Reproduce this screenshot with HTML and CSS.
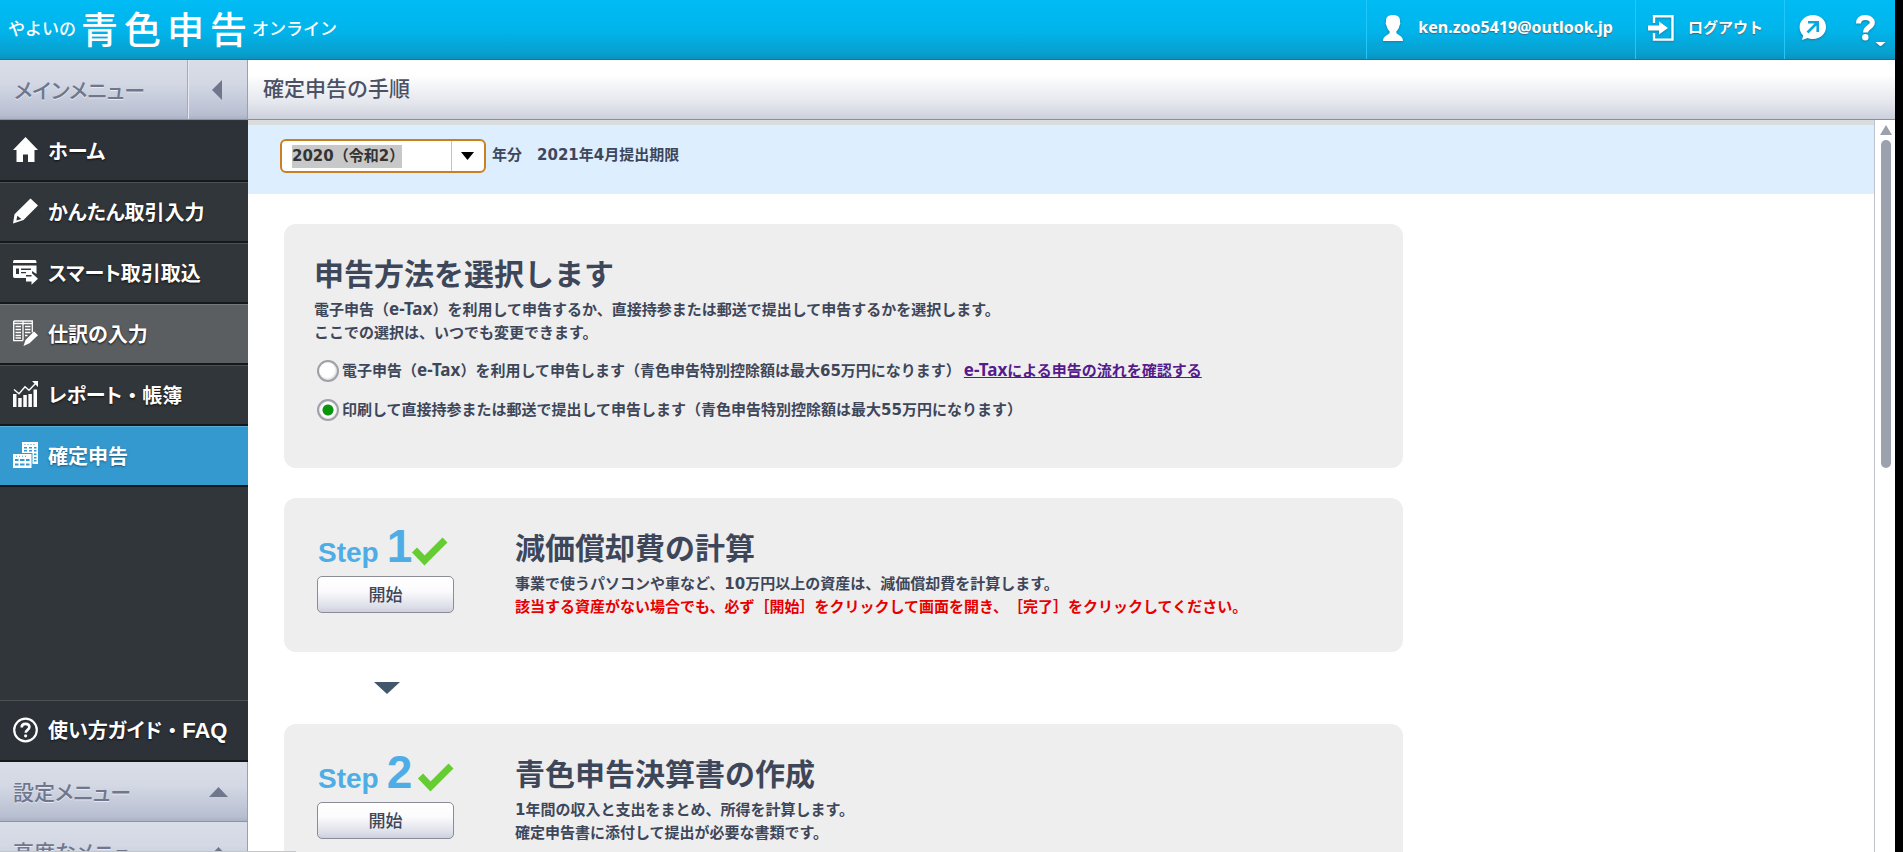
FILE: index.html
```html
<!DOCTYPE html>
<html lang="ja">
<head>
<meta charset="utf-8">
<title>確定申告の手順</title>
<link rel="stylesheet" href="styles.css">
</head>
<body>
<div class="app">
  <header class="topbar">
    <a class="logo" href="#"><span class="logo-small">やよいの</span><span class="logo-big"><span>青</span><span>色</span><span>申</span><span>告</span></span><span class="logo-small">オンライン</span></a>
    <div class="tools">
      <a class="tool tool-user" href="#">
        <svg width="20" height="26" viewBox="0 0 20 26"><path fill="#fff" d="M10 0c4.600 0 7.200 2 7 6 0 1-.1 1.700.4 2.300-.3 1.500-.9 1.900-1 2.700-.4 2.300-1.600 4-3 5.200v1.600c0 2 6.600 2.500 6.600 8.200H0c0-5.700 6.600-6.200 6.600-8.200v-1.600C5.200 15 4 13.300 3.600 11c-.1-.8-.7-1.200-1-2.700.5-.6.4-1.300.4-2.300C2.800 2 5.400 0 10 0z"/></svg>
        <span class="email">ken.zoo5419@outlook.jp</span>
      </a>
      <a class="tool tool-logout" href="#">
        <svg width="26" height="26" viewBox="0 0 26 26"><path fill="none" stroke="#fff" stroke-width="2.400" d="M6 8V1.200h18.500v23.400H6V18"/><path fill="#fff" d="M0 10.500h11V6.500l9 6.500-9 6.500v-4H0z"/></svg>
        <span>ログアウト</span>
      </a>
      <div class="tool tool-icons">
        <button class="icon-button" aria-label="お問い合わせ"><svg width="27" height="26" viewBox="0 0 27 26"><path fill="#fff" d="M14 0c7.200 0 13 5.200 13 12s-5.800 12-13 12c-2 0-3.700-.3-5.300-1.100L3 25l1.200-4.600C1.900 18.300.6 15.400.6 12 .6 5.200 6.800 0 14 0z"/><path fill="none" stroke="#0aa9dd" stroke-width="2.600" d="M9 7.300h9.700V17M18 8l-9.500 9.500"/></svg></button>
        <button class="icon-button help" aria-label="ヘルプ"><svg width="30" height="31" viewBox="0 0 30 31"><path fill="none" stroke="#fff" stroke-width="5" d="M2.500 8.500C2.500 4.500 5 2.500 9.300 2.500s7 2 7 5.200c0 4.600-6.800 4.300-6.800 9.800"/><circle cx="9.300" cy="22.300" r="3.200" fill="#fff"/><path fill="#fff" d="M19.500 27h10l-5 4.500z"/></svg></button>
      </div>
    </div>
  </header>

  <div class="body">
    <aside class="sidebar">
      <div class="menu-head">
        <span class="menu-head-title">メインメニュー</span>
        <button class="collapse" aria-label="メニューを閉じる"><svg width="10" height="20" viewBox="0 0 10 20"><path fill="#70778d" d="M10 0v20L0 10z"/></svg></button>
      </div>
      <nav class="nav">
        <a class="nav-item" href="#"><svg width="25" height="26" viewBox="0 0 25 26"><path fill="#fff" d="M12.500 0L25 13h-3.500v12H15v-7.500h-5V25H3.500V13H0z"/></svg>ホーム</a>
        <a class="nav-item" href="#"><svg width="25" height="26" viewBox="0 0 25 26"><path fill="#fff" fill-rule="evenodd" d="M17.500.5L25 7.500 10.500 22 0 25.500l1.500-9.300zM4.300 17.800l-.9 4.700 5-1.500z"/></svg>かんたん取引入力</a>
        <a class="nav-item" href="#"><svg width="25" height="26" viewBox="0 0 25 26"><path fill="#fff" d="M1 1h21q1.500 0 1.500 3H0q0-3 1-3z"/><path fill="#fff" fill-rule="evenodd" d="M0 6.500h23.500V15l-4.500-3v4h-6v3H1.500Q0 19 0 17zM3 9.500v5.500h3V9.500zM8 9.500V11h10V9.500zM8 13v1.300h5V13z"/><path fill="#fff" d="M13 17.500h5.500v-3.700l6.500 6-6.500 6V22.500H13z"/></svg>スマート取引取込</a>
        <a class="nav-item is-hover" href="#"><svg width="25" height="26" viewBox="0 0 25 26"><path fill="none" stroke="#fff" stroke-width="1.300" d="M.7 1h18.600v11.500M.7 1v19.600H10M10 1v19.600M.7 3.500h18.600"/><path fill="none" stroke="#fff" stroke-width="1.500" d="M2.500 6.500H8M2.500 9.500H8M2.500 12.500H8M2.500 15.500H8M2.500 18H8M12 6.500h5.500M12 9.500h5.500M12 12.500h5.500M12 15.500h2.500"/><path fill="#fff" d="M21 11.500l4 3.700-8.500 8L10.500 26l2-6z"/></svg>仕訳の入力</a>
        <a class="nav-item" href="#"><svg width="25" height="26" viewBox="0 0 25 26"><path fill="#fff" d="M0 13h3.500v13H0zM5.200 17h3.500v9H5.200zM10.300 14h3.500v12h-3.500zM15.400 13h3.500v13h-3.500zM20.500 8.500H24V26h-3.500zM19 0h6v6z"/><path fill="none" stroke="#fff" stroke-width="1.400" d="M1 8.500l5 4.300 6-7 4 3.500L23.500 1.500"/></svg><span>レポート<span class="wide-dot">・</span>帳簿</span></a>
        <a class="nav-item is-current" href="#" aria-current="page"><svg width="25" height="26" viewBox="0 0 25 26"><path fill="#fff" fill-rule="evenodd" d="M9 0h16v22h-5.500V11H9zM11 5v1.500h3V5zM16 5v1.500h3V5zM21 5v1.500h2.500V5zM11 8v1.500h3V8zM16 8v1.500h3V8zM21 8v1.500h2.500V8zM21 11.500V13h2.500v-1.500zM21 15v1.500h2.500V15zM21 18v1.500h2.500V18zM11.500 2v1h1V2zM14.500 2v1h1V2zM17.500 2v1h1V2zM20.500 2v1h1V2z"/><path fill="#fff" fill-rule="evenodd" d="M0 12h18.500v14H0zM2 17v2h3.500v-2zM7 17v2h4.500v-2zM13 17v2h3.500v-2zM2 21.500v2h3.500v-2zM7 21.500v2h4.500v-2zM13 21.500v2h3.500v-2zM3 13.700v1h1v-1zM6 13.700v1h1v-1zM9 13.700v1h1v-1zM12 13.700v1h1v-1z"/></svg>確定申告</a>
      </nav>
      <a class="nav-item faq" href="#"><svg width="25" height="26" viewBox="0 0 25 26"><circle cx="12.500" cy="13" r="11.300" fill="none" stroke="#fff" stroke-width="2.200"/><path fill="none" stroke="#fff" stroke-width="2.600" d="M8.700 10.500c0-2.300 1.500-3.600 3.800-3.600s3.900 1.200 3.900 3.200c0 2.800-3.700 2.700-3.700 5.700"/><circle cx="12.600" cy="18.800" r="1.600" fill="#fff"/></svg><span>使い方ガイド<span class="wide-dot">・</span><span class="latin">FAQ</span></span></a>
      <button class="menu-fold">設定メニュー<svg width="19" height="10" viewBox="0 0 19 10"><path fill="#70778d" d="M9.500 0L19 10H0z"/></svg></button>
      <button class="menu-fold">高度なメニュー<svg width="19" height="10" viewBox="0 0 19 10"><path fill="#70778d" d="M9.500 0L19 10H0z"/></svg></button>
    </aside>

    <main class="main">
      <h1 class="page-title">確定申告の手順</h1>
      <div class="scroll-area">
        <div class="content">
          <div class="year-bar">
            <div class="combo">
              <input class="combo-input" id="year" type="text" value="2020（令和2）">
              <button class="combo-button" aria-label="年を選択"><svg width="13" height="8" viewBox="0 0 13 8"><path d="M0 0h13L6.500 8z"/></svg></button>
            </div>
            <label for="year">年分　<span class="num">2021</span>年<span class="num">4</span>月提出期限</label>
          </div>

          <div class="cards">
            <section class="card card-method">
              <h2 class="card-title">申告方法を選択します</h2>
              <p class="text">電子申告（<span class="etax">e-Tax</span>）を利用して申告するか、直接持参または郵送で提出して申告するかを選択します。<br>ここでの選択は、いつでも変更できます。</p>
              <div class="options">
                <div class="option"><input class="radio" type="radio" name="method" id="etax"><label for="etax">電子申告（<span class="etax">e-Tax</span>）を利用して申告します（青色申告特別控除額は最大<span class="num">65</span>万円になります）</label><a class="link" href="#"><span class="etax">e-Tax</span>による申告の流れを確認する</a></div>
                <div class="option"><input class="radio" type="radio" name="method" id="print" checked><label for="print">印刷して直接持参または郵送で提出して申告します（青色申告特別控除額は最大<span class="num">55</span>万円になります）</label></div>
              </div>
            </section>

            <section class="card card-step">
              <div class="step">
                <div class="step-label"><span>Step</span><span class="step-no step-no-narrow">1</span><svg class="check" width="36" height="25" viewBox="0 0 36 25"><path fill="none" stroke="#66cc33" stroke-width="7" d="M2.500 13l10 10.500L33 3"/></svg></div>
                <button class="start">開始</button>
              </div>
              <div>
                <h2 class="card-title">減価償却費の計算</h2>
                <p class="text">事業で使うパソコンや車など、<span class="num">10</span>万円以上の資産は、減価償却費を計算します。<br><span class="warn">該当する資産がない場合でも、必ず［開始］をクリックして画面を開き、［完了］をクリックしてください。</span></p>
              </div>
            </section>

            <svg class="next" width="26" height="12" viewBox="0 0 26 12"><path fill="#42566c" d="M0 0h26L13 12z"/></svg>

            <section class="card card-step">
              <div class="step">
                <div class="step-label"><span>Step</span><span class="step-no">2</span><svg class="check" width="36" height="25" viewBox="0 0 36 25"><path fill="none" stroke="#66cc33" stroke-width="7" d="M2.500 13l10 10.500L33 3"/></svg></div>
                <button class="start">開始</button>
              </div>
              <div>
                <h2 class="card-title">青色申告決算書の作成</h2>
                <p class="text"><span class="num">1</span>年間の収入と支出をまとめ、所得を計算します。<br>確定申告書に添付して提出が必要な書類です。</p>
              </div>
            </section>
          </div>
        </div>
        <div class="scrollbar">
          <svg width="12" height="10" viewBox="0 0 12 10"><path fill="#9ca1ae" d="M6 0l6 10H0z"/></svg>
          <div class="thumb"></div>
        </div>
      </div>
    </main>
  </div>
  <div class="status-edge"></div>
</div>
</body>
</html>
```
FILE: styles.css
```css
* { box-sizing: border-box; }

body {
  margin: 0;
  background: #000;
  color: #3e475a;
  font: bold 15px/23px "Noto Sans", "Noto Sans CJK JP", sans-serif;
  text-spacing-trim: space-all;
}

h1, h2, p { margin: 0; }
a { color: inherit; text-decoration: none; }
svg { display: block; flex: none; }

button {
  margin: 0;
  padding: 0;
  border: 0;
  background: none;
  color: inherit;
  font: inherit;
}

.app {
  display: flex;
  flex-direction: column;
  height: 100vh;
  margin-right: 8px;
  overflow: hidden;
  background: #fff;
}

/* Top bar */
.topbar {
  display: flex;
  flex: none;
  justify-content: space-between;
  height: 60px;
  border-bottom: 1px solid #0b7ba0;
  background: linear-gradient(#00bbf4, #00b5ec 50%, #08a0cf 90%, #0a93be);
  color: #fff;
}

.logo {
  display: flex;
  align-items: center;
  gap: 5px;
  padding-left: 8px;
  font-family: "Noto Sans CJK JP", sans-serif;
  font-weight: 500;
}

.logo-small { padding-bottom: 4px; font-size: 17px; }

.logo-big {
  display: flex;
  gap: 6px;
  padding-bottom: 2px;
  font-size: 37px;
}

.tools { display: flex; text-shadow: 0 1px 1px #53606c; }

.tool {
  display: flex;
  align-items: center;
  gap: 15px;
  padding: 0 20px 4px 16px;
  border-left: 1px solid #22c8f8;
}

.tool svg { filter: drop-shadow(0 1px 1px #1b7d9f); }
.tool-user { padding-right: 22px; }
.tool-logout { gap: 14px; padding: 0 21px 4px 12px; }
.tool-icons { gap: 30px; padding: 0 9px 4px 14px; }
.email { font-size: 16px; }
.help { padding-top: 5px; }

/* Sidebar */
.body { display: flex; flex: 1; min-height: 0; }

.sidebar {
  display: flex;
  flex: none;
  flex-direction: column;
  width: 248px;
  overflow: hidden;
  background: #31363a;
  font-family: "Noto Sans CJK JP", sans-serif;
  font-size: 20px;
  font-feature-settings: "palt";
}

.menu-head, .menu-fold {
  display: flex;
  flex: none;
  height: 60px;
  border-right: 1px solid #9aa0b0;
  border-bottom: 1px solid #8d93a3;
  background: linear-gradient(#d9dde8, #d3d8e4 40%, #b8bfd1 92%, #abb2c4);
  color: #70778d;
  font-size: 21px;
  font-weight: 500;
  text-shadow: 0 1px 0 #e6e9f2;
}

.menu-head { align-items: stretch; }

.menu-head-title {
  display: flex;
  flex: 1;
  align-items: center;
  padding-left: 14px;
}

.collapse {
  display: grid;
  place-items: center;
  width: 60px;
  padding-right: 2px;
  border-left: 1px solid #a5abbb;
  box-shadow: inset 1px 0 #e6e9f2;
}

.menu-fold {
  align-items: center;
  justify-content: space-between;
  padding: 0 19px 0 13px;
}

.nav {
  flex: none;
  min-height: 580px;
  padding-top: 1px;
}

.nav-item {
  display: flex;
  flex: none;
  align-items: center;
  gap: 10px;
  height: 61px;
  padding: 0 13px 2px;
  border-top: 1px solid #4b5054;
  border-bottom: 2px solid #16191b;
  background: #31363a;
  color: #fff;
  text-shadow: 0 1px 2px #111;
}

.nav-item:first-child { border-top-color: #2d3238; background: #2d3238; }
.nav-item.is-hover { border-top-color: #74797d; background: #5a5e61; }
.nav-item.is-current {
  border-top-color: #58acd9;
  background: #3399cf;
  text-shadow: 0 1px 2px #1b5a80;
}
.nav-item.faq { height: 62px; background: #2d3239; }

.wide-dot { font-feature-settings: normal; }
.latin { font-family: "Liberation Sans", sans-serif; font-size: 22px; }

/* Main column */
.main {
  display: flex;
  flex: 1;
  flex-direction: column;
  min-width: 0;
}

.page-title {
  display: flex;
  flex: none;
  align-items: center;
  height: 60px;
  padding: 0 15px 2px;
  border-bottom: 1px solid #8c8f99;
  background: linear-gradient(#fff, #fff 25%, #e3e5ec 75%, #ccd0db);
  color: #4b5163;
  font-size: 21px;
  font-weight: 500;
}

.scroll-area { display: flex; flex: 1; min-height: 0; }

.content { flex: 1; min-width: 0; overflow: hidden; }

.year-bar {
  display: flex;
  align-items: flex-start;
  gap: 6px;
  height: 74px;
  padding: 14px 32px;
  border-top: 5px solid #dadcde;
  background: #ddeeff;
}

.year-bar label { padding-top: 4px; }

.combo {
  display: flex;
  align-items: center;
  width: 206px;
  height: 34px;
  border: 2px solid #cb7f20;
  border-radius: 6px;
  background: #fff;
}

.combo-input {
  width: 110px;
  height: 23px;
  margin: 0 auto 0 10px;
  padding: 0;
  border: 0;
  outline: 0;
  background: #c8c8c8;
  color: #333;
  font: bold 15px/23px "DejaVu Sans", "Noto Sans CJK JP", sans-serif;
}

.combo-button {
  display: grid;
  place-items: center;
  align-self: stretch;
  width: 33px;
  padding-right: 2px;
  border-left: 1px solid #c4c4c4;
}

/* Cards */
.cards {
  display: flex;
  flex-direction: column;
  gap: 30px;
  max-width: 1191px;
  padding: 30px 36px;
}

.card {
  padding: 30px 30px 34px;
  border-radius: 12px;
  background: #eee;
}

.card-title {
  margin-bottom: 4px;
  font-size: 30px;
  line-height: 40px;
}

.card-method { padding-bottom: 47px; }

.card-step {
  display: flex;
  gap: 61px;
  padding-left: 33px;
}

.num { font-family: "DejaVu Sans", sans-serif; line-height: 1; }
.etax { font-size: 17px; line-height: 1; }
.warn { color: #e60000; }
.link { color: #551a8b; text-decoration: underline; }

.options {
  display: flex;
  flex-direction: column;
  gap: 16px;
  padding: 15px 0 0 3px;
}

.option { display: flex; align-items: center; gap: 3px; }

.radio {
  appearance: none;
  width: 22px;
  height: 22px;
  margin: 0;
  border: 2px solid #a0a1a8;
  border-radius: 50%;
  background: radial-gradient(circle at 45% 45%, #fff 50%, #d6d6dc 75%);
}

.radio:checked {
  background: radial-gradient(circle, #0a960a 5px, #fff 6px, #fff 7px, #d6d6dc 10px);
}

.step { width: 137px; }

.step-label {
  display: flex;
  align-items: baseline;
  height: 48px;
  padding-left: 1px;
  color: #4fade6;
  font-family: "Liberation Sans", sans-serif;
  font-size: 28px;
  line-height: 36px;
}

.step-no { margin: 0 6px 0 8px; font-size: 46px; }
.step-no-narrow { margin-right: 0; }
.check { overflow: visible; }

.start {
  width: 137px;
  height: 37px;
  border: 1px solid #8a8d98;
  border-radius: 5px;
  background: linear-gradient(#fff, #fbfbfd 40%, #dcdfe8 85%, #cdd0dc);
  font-size: 17px;
  font-weight: 500;
}

.next { margin-left: 90px; }

/* Scroll bar */
.scrollbar {
  display: flex;
  flex-direction: column;
  align-items: center;
  gap: 5px;
  width: 21px;
  padding: 5px 3px 0 4px;
  border-left: 1px solid #bfc3cd;
}

.thumb {
  width: 10px;
  height: 328px;
  border-radius: 5px;
  background: #9ca1ae;
}

.status-edge {
  position: absolute;
  bottom: 0;
  left: 0;
  width: 296px;
  height: 1px;
  background: #c4c6c8;
}
```
